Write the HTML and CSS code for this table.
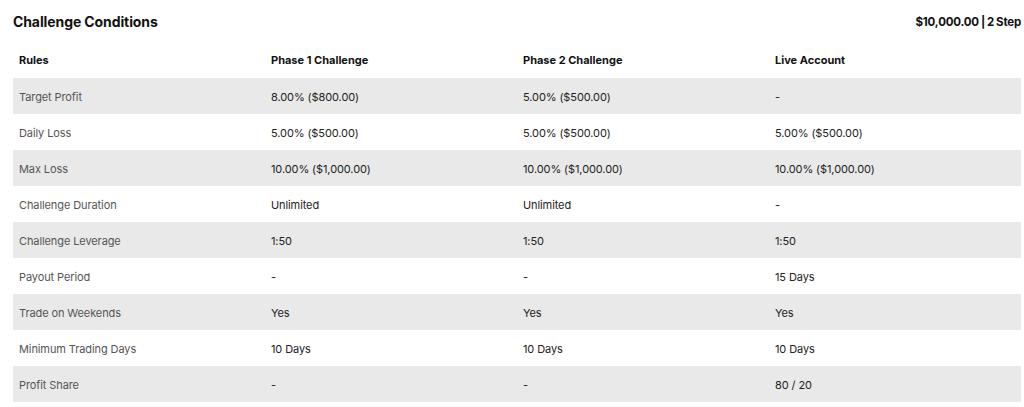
FILE: index.html
```html
<!DOCTYPE html>
<html>
<head>
<meta charset="utf-8">
<link rel="stylesheet" href="styles.css">
</head>
<body>
<div class="wrap">
  <div class="topbar">
    <h2 class="title">Challenge Conditions</h2>
    <div class="plan">$10,000.00 | 2 Step</div>
  </div>
  <table class="rules">
    <thead>
      <tr><th>Rules</th><th>Phase 1 Challenge</th><th>Phase 2 Challenge</th><th>Live Account</th></tr>
    </thead>
    <tbody>
      <tr><td>Target Profit</td><td>8.00% ($800.00)</td><td>5.00% ($500.00)</td><td>-</td></tr>
      <tr><td>Daily Loss</td><td>5.00% ($500.00)</td><td>5.00% ($500.00)</td><td>5.00% ($500.00)</td></tr>
      <tr><td>Max Loss</td><td>10.00% ($1,000.00)</td><td>10.00% ($1,000.00)</td><td>10.00% ($1,000.00)</td></tr>
      <tr><td>Challenge Duration</td><td>Unlimited</td><td>Unlimited</td><td>-</td></tr>
      <tr><td>Challenge Leverage</td><td>1:50</td><td>1:50</td><td>1:50</td></tr>
      <tr><td>Payout Period</td><td>-</td><td>-</td><td>15 Days</td></tr>
      <tr><td>Trade on Weekends</td><td>Yes</td><td>Yes</td><td>Yes</td></tr>
      <tr><td>Minimum Trading Days</td><td>10 Days</td><td>10 Days</td><td>10 Days</td></tr>
      <tr><td>Profit Share</td><td>-</td><td>-</td><td>80 / 20</td></tr>
    </tbody>
  </table>
</div>
</body>
</html>
```
FILE: styles.css
```css
html, body {
  margin: 0;
  padding: 0;
  background: #ffffff;
}
body {
  font-family: "Inter", "Liberation Sans", sans-serif;
  color: #222222;
}
.wrap {
  width: 1008px;
  padding: 0 3px 0 13px;
}
.topbar {
  display: flex;
  justify-content: space-between;
  align-items: center;
  height: 42px;
  padding-top: 1px;
  box-sizing: border-box;
}
.title {
  margin: 0;
  font-size: 14px;
  font-weight: 700;
  color: #111111;
  letter-spacing: -0.1px;
}
.plan {
  font-size: 11.5px;
  font-weight: 700;
  color: #111111;
  letter-spacing: -0.2px;
  word-spacing: -0.5px;
}
.rules {
  width: 1008px;
  border-collapse: collapse;
  table-layout: fixed;
}
.rules th, .rules td {
  height: 36px;
  padding: 0 6px;
  box-sizing: border-box;
  text-align: left;
  vertical-align: middle;
  font-size: 11px;
}
.rules th {
  font-weight: 700;
  color: #111111;
}
.rules td {
  padding-top: 2px;
  color: #222222;
  letter-spacing: -0.1px;
}
.rules td:first-child {
  color: #555555;
}
.rules tbody tr:nth-child(odd) {
  background: #e9e9e9;
}
```
